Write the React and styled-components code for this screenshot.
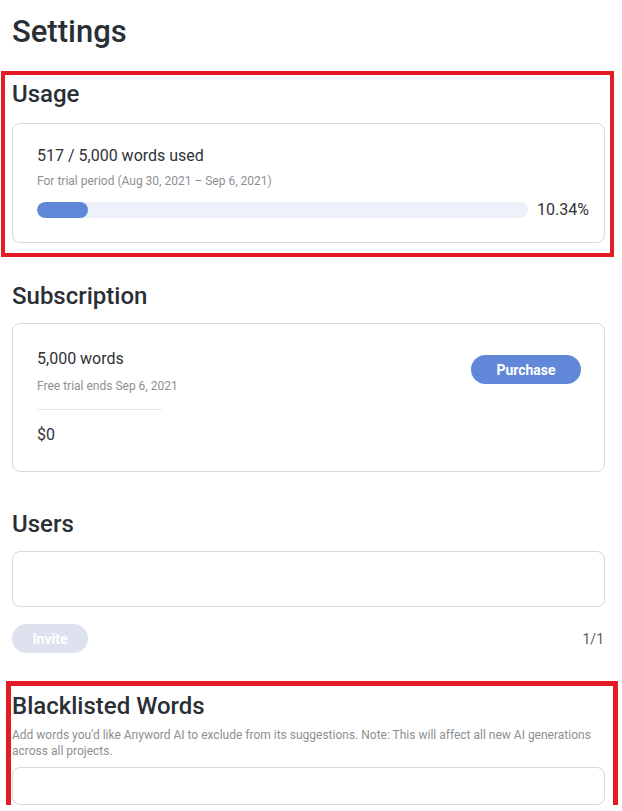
import styled, { createGlobalStyle } from "styled-components";

const GlobalStyle = createGlobalStyle`
  body {
    margin: 0;
    background: #ffffff;
    font-family: Roboto, "Noto Sans", Arial, sans-serif;
    color: #2b3036;
  }
`;

const Page = styled.div`
  width: 593px;
  padding: 14px 0 0 12px;
`;

const Title = styled.h1`
  margin: 0;
  font-size: 31px;
  line-height: 36px;
  font-weight: 500;
  color: #2a2f35;
`;

const Section = styled.section`
  position: relative;
  margin-top: ${(p) => p.$top}px;

  ${(p) =>
    p.$mark &&
    `
    &::after {
      content: "";
      position: absolute;
      top: ${p.$mark.top}px;
      left: ${p.$mark.left}px;
      right: ${p.$mark.right}px;
      bottom: ${p.$mark.bottom}px;
      border: ${p.$mark.width}px solid #e31c25;
      pointer-events: none;
    }
  `}
`;

const Heading = styled.h2`
  margin: 0 0 ${(p) => p.$gap ?? 15}px;
  font-size: 24px;
  line-height: 28px;
  font-weight: 500;
  color: #2a2f35;
`;

const Card = styled.div`
  border: 1px solid #d8d8d8;
  border-radius: 8px;
  padding: ${(p) => p.$pad};
  background: #fff;
`;

const MainText = styled.div`
  font-size: 16px;
  line-height: 20px;
  color: #2f3338;
`;

const SubText = styled.div`
  margin-top: ${(p) => p.$top ?? 0}px;
  font-size: 12px;
  line-height: 16px;
  color: #8d8f93;
`;

const BarRow = styled.div`
  display: flex;
  align-items: center;
  gap: 9px;
  margin-top: 11px;
`;

const Track = styled.div`
  flex: 1;
  height: 16px;
  border-radius: 8px;
  background: #edf2fa;
  overflow: hidden;
`;

const Fill = styled.div`
  height: 100%;
  border-radius: 8px;
  background: #5f87d8;
`;

const Percent = styled.span`
  font-size: 16px;
  line-height: 20px;
  color: #2f3338;
`;

const PlanRow = styled.div`
  display: flex;
  justify-content: space-between;
  align-items: flex-start;
`;

const Divider = styled.div`
  width: 125px;
  height: 1px;
  margin: 15px 0;
  background: #e6e8ee;
`;

const PillButton = styled.button`
  height: 29px;
  width: ${(p) => p.$w}px;
  margin-top: ${(p) => p.$top ?? 0}px;
  border: none;
  border-radius: 15px;
  background: ${(p) => (p.$disabled ? "#dde2ee" : "#6188d8")};
  color: #fff;
  font-family: Roboto, Arial, sans-serif;
  font-size: 14px;
  font-weight: 700;
  padding: 0;
  cursor: ${(p) => (p.$disabled ? "default" : "pointer")};
`;

const InputBox = styled.div`
  height: ${(p) => p.$h}px;
  box-sizing: border-box;
  border: 1px solid #d8d8d8;
  border-radius: 8px;
  background: #fff;
`;

const InviteRow = styled.div`
  display: flex;
  justify-content: space-between;
  align-items: center;
  margin-top: 17px;
`;

const Count = styled.span`
  font-size: 14px;
  color: #5a5e63;
  padding-right: 1px;
`;

const Description = styled.p`
  margin: 0 0 8px;
  font-size: 12px;
  line-height: 16px;
  color: #8d8f93;
  padding-right: 10px;
`;

export default function App() {
  const used = 517;
  const total = 5000;
  const pct = (used / total) * 100;

  return (
    <>
      <GlobalStyle />
      <Page>
        <Title>Settings</Title>

        <Section $top={30} $mark={{ top: -9, left: -11, right: -9, bottom: -14, width: 4 }}>
          <Heading>Usage</Heading>
          <Card $pad="22px 15px 22px 24px">
            <MainText>517 / 5,000 words used</MainText>
            <SubText $top={7}>For trial period (Aug 30, 2021 – Sep 6, 2021)</SubText>
            <BarRow>
              <Track>
                <Fill style={{ width: `${pct}%` }} />
              </Track>
              <Percent>10.34%</Percent>
            </BarRow>
          </Card>
        </Section>

        <Section $top={39}>
          <Heading $gap={13}>Subscription</Heading>
          <Card $pad="25px 23px 26px 24px">
            <PlanRow>
              <div>
                <MainText>5,000 words</MainText>
                <SubText $top={9}>Free trial ends Sep 6, 2021</SubText>
                <Divider />
                <MainText>$0</MainText>
              </div>
              <PillButton $w={110} $top={6}>Purchase</PillButton>
            </PlanRow>
          </Card>
        </Section>

        <Section $top={38}>
          <Heading $gap={13}>Users</Heading>
          <InputBox $h={56} />
          <InviteRow>
            <PillButton $w={76} $disabled>Invite</PillButton>
            <Count>1/1</Count>
          </InviteRow>
        </Section>

        <Section $top={39} $mark={{ top: -11, left: -6, right: -13, bottom: -7, width: 5 }}>
          <Heading $gap={7}>Blacklisted Words</Heading>
          <Description>
            Add words you'd like Anyword AI to exclude from its suggestions. Note: This will affect all new AI generations across all projects.
          </Description>
          <InputBox $h={38} />
        </Section>
      </Page>
    </>
  );
}
